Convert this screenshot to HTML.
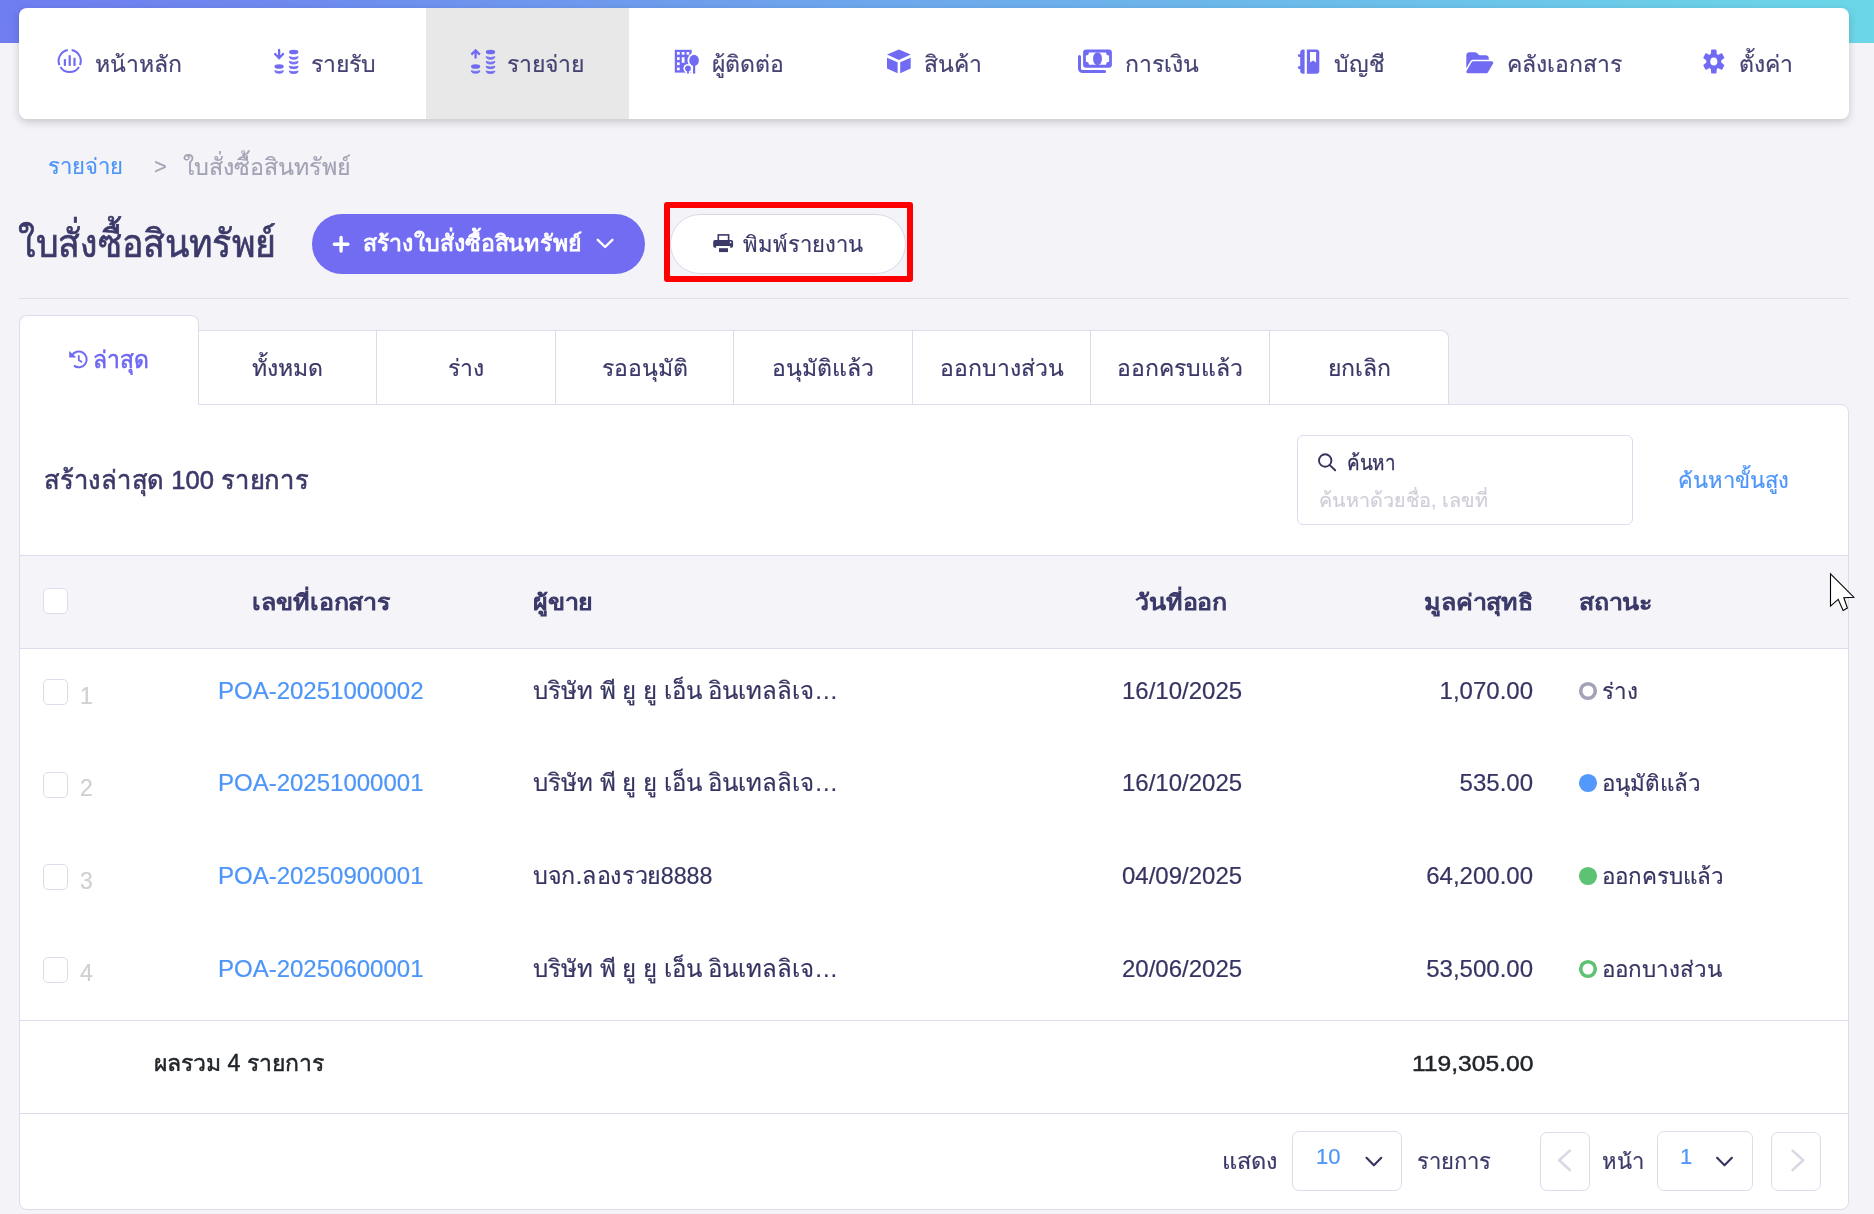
<!DOCTYPE html>
<html lang="th">
<head>
<meta charset="utf-8">
<title>ใบสั่งซื้อสินทรัพย์</title>
<style>
*{box-sizing:border-box;margin:0;padding:0}
html,body{width:1874px;height:1214px;overflow:hidden}
body{background:#f3f3f8;font-family:"Liberation Sans",sans-serif;color:#3b3969;position:relative;-webkit-text-stroke-width:.2px}
.abs{position:absolute;white-space:nowrap}
#topbar{left:0;top:0;width:1874px;height:43px;background:linear-gradient(90deg,#6f7df0 0%,#6bd7e8 100%)}
#nav{left:19px;top:8px;width:1830px;height:111px;background:#fff;border-radius:8px;box-shadow:0 3px 8px rgba(0,0,0,.18)}
#navactive{left:426px;top:8px;width:203px;height:111px;background:#e8e8e8}
.nt{font-size:23px;line-height:30px;top:49px;color:#454373;margin-left:-1px}
.bc{font-size:22px;line-height:30px;top:151.500px}
#title{left:18px;top:215.500px;font-size:38.600px;line-height:56px;color:#3b3969;transform-origin:0 50%;transform:scaleX(.926);-webkit-text-stroke:.7px #3b3969}
#btnc{left:312px;top:214px;width:333px;height:60px;border-radius:30px;background:#716cf1}
#btnct{left:362.800px;top:229px;font-size:22px;line-height:30px;font-weight:400;color:#fff;-webkit-text-stroke:.8px #fff;transform-origin:0 50%;transform:scaleX(1.053)}
#btnp{left:670px;top:214px;width:236px;height:60px;border-radius:30px;background:#fff;border:1px solid #d9d9e6}
#btnpt{left:742.500px;top:230px;font-size:22px;line-height:30px;color:#3b3969}
#red{left:663.500px;top:202px;width:249.500px;height:79.500px;border:6px solid #fe0000;border-radius:3px}
#hr{left:19px;top:298px;width:1830px;height:1px;background:#dfdfea}
.tab{top:330px;height:75px;background:#fff;border:1px solid #dcdcec;border-left:none;font-size:23px;line-height:30px;text-align:center;padding-top:22px;color:#3b3969}
#tab0{left:19px;top:315px;width:180px;height:90px;background:#fff;border:1px solid #dcdcec;border-bottom:none;border-radius:8px 8px 0 0}
#tab0t{left:93px;top:344.500px;font-size:24px;line-height:30px;color:#6d67f1;transform-origin:0 50%;transform:scaleX(.955);-webkit-text-stroke:.6px #6d67f1}
#card{left:19px;top:404px;width:1830px;height:806px;background:#fff;border:1px solid #dcdcec;border-radius:0 8px 8px 8px}
#ctitle{left:43.500px;top:462px;font-size:26px;line-height:36px;color:#3b3969;transform-origin:0 50%;transform:scaleX(.985);-webkit-text-stroke:.55px #3b3969}
#search{left:1297px;top:435px;width:336px;height:90px;border:1px solid #dcdcec;border-radius:6px;background:#fff}
#st{left:1347px;top:448px;font-size:21px;line-height:30px;color:#34325f;transform-origin:0 50%;transform:scaleX(.9);-webkit-text-stroke:.3px #34325f}
#sp{left:1319px;top:485px;font-size:19.800px;line-height:30px;color:#cfcfd9}
#adv{left:1678px;top:466px;font-size:22px;line-height:30px;color:#4d95f8}
#thead{left:20px;top:555px;width:1828px;height:94px;background:#f5f5f9;border-top:1px solid #dcdcec;border-bottom:1px solid #dcdcec}
.th{top:587.500px;font-size:22px;line-height:30px;font-weight:400;color:#3b3969;-webkit-text-stroke:1.05px #3b3969;transform-origin:0 50%;transform:scaleX(1.135)}
.th.r{transform-origin:100% 50%}
.cb{left:43px;width:25px;height:26px;border:1px solid #dcdcec;border-radius:5px;background:#fff}
.td{font-size:24px;line-height:30px;color:#363462}
.st{font-size:22.400px;margin-left:-1.500px;margin-top:1px}
.no{left:80px;font-size:23px;line-height:30px;color:#d0d0d0}
.lnk{color:#4d95f8}
.ln{left:20px;width:1828px;height:1px;background:#dcdcec}
.sum{font-size:23px;line-height:30px;color:#212529;-webkit-text-stroke:.45px #212529}
.sumr{font-size:22.400px;transform-origin:100% 50%;transform:scaleX(1.1)}
.pg{font-size:22px;line-height:30px;top:1147px;color:#3b3969}
.box{top:1131px;height:60px;border:1px solid #dcdcec;border-radius:7px;background:#fff}
.bl{font-size:22px;line-height:30px;top:1142px;color:#4d95f8}
#ov{left:0;top:0}
</style>
</head>
<body><div id="wrap" style="position:absolute;left:0;top:0;width:1874px;height:1214px;will-change:transform">
<div id="topbar" class="abs"></div>
<div id="nav" class="abs"></div>
<div id="navactive" class="abs"></div>
<div class="abs nt" style="left:96px">หน้าหลัก</div>
<div class="abs nt" style="left:312px">รายรับ</div>
<div class="abs nt" style="left:508px">รายจ่าย</div>
<div class="abs nt" style="left:713px">ผู้ติดต่อ</div>
<div class="abs nt" style="left:925px">สินค้า</div>
<div class="abs nt" style="left:1126px">การเงิน</div>
<div class="abs nt" style="left:1335px">บัญชี</div>
<div class="abs nt" style="left:1508px">คลังเอกสาร</div>
<div class="abs nt" style="left:1740px">ตั้งค่า</div>

<div class="abs bc" style="left:48px;color:#4d95f8">รายจ่าย</div>
<div class="abs bc" style="left:154px;color:#a3a3b5">&gt;</div>
<div class="abs bc" style="left:183px;color:#a3a3b5;font-size:23.3px">ใบสั่งซื้อสินทรัพย์</div>

<div id="title" class="abs">ใบสั่งซื้อสินทรัพย์</div>
<div id="btnc" class="abs"></div>
<div id="btnct" class="abs">สร้างใบสั่งซื้อสินทรัพย์</div>
<div id="btnp" class="abs"></div>
<div id="btnpt" class="abs">พิมพ์รายงาน</div>
<div id="red" class="abs"></div>
<div id="hr" class="abs"></div>

<div id="card" class="abs"></div>
<div id="tab0" class="abs"></div>
<div id="tab0t" class="abs">ล่าสุด</div>
<div class="abs tab" style="left:198px;width:179px;border-left:1px solid #dcdcec">ทั้งหมด</div>
<div class="abs tab" style="left:377px;width:179px">ร่าง</div>
<div class="abs tab" style="left:556px;width:178px">รออนุมัติ</div>
<div class="abs tab" style="left:734px;width:179px">อนุมัติแล้ว</div>
<div class="abs tab" style="left:913px;width:178px">ออกบางส่วน</div>
<div class="abs tab" style="left:1091px;width:179px">ออกครบแล้ว</div>
<div class="abs tab" style="left:1270px;width:179px;border-top-right-radius:8px">ยกเลิก</div>

<div id="ctitle" class="abs">สร้างล่าสุด 100 รายการ</div>
<div id="search" class="abs"></div>
<div id="st" class="abs">ค้นหา</div>
<div id="sp" class="abs">ค้นหาด้วยชื่อ, เลขที่</div>
<div id="adv" class="abs">ค้นหาขั้นสูง</div>

<div id="thead" class="abs"></div>
<div class="abs cb" style="top:588px"></div>
<div class="abs th" style="left:252px">เลขที่เอกสาร</div>
<div class="abs th" style="left:533px">ผู้ขาย</div>
<div class="abs th" style="left:1135px">วันที่ออก</div>
<div class="abs th r" style="right:341px">มูลค่าสุทธิ</div>
<div class="abs th" style="left:1579px">สถานะ</div>

<!-- row 1 -->
<div class="abs cb" style="top:679px"></div>
<div class="abs no" style="top:681px">1</div>
<div class="abs td lnk" style="left:218px;top:676px">POA-20251000002</div>
<div class="abs td" style="left:533px;top:676px">บริษัท พี ยู ยู เอ็น อินเทลลิเจ…</div>
<div class="abs td" style="left:1122px;top:676px">16/10/2025</div>
<div class="abs td" style="right:341px;top:676px">1,070.00</div>
<div class="abs td st" style="left:1603px;top:676px">ร่าง</div>
<!-- row 2 -->
<div class="abs cb" style="top:772px"></div>
<div class="abs no" style="top:773px">2</div>
<div class="abs td lnk" style="left:218px;top:768px">POA-20251000001</div>
<div class="abs td" style="left:533px;top:768px">บริษัท พี ยู ยู เอ็น อินเทลลิเจ…</div>
<div class="abs td" style="left:1122px;top:768px">16/10/2025</div>
<div class="abs td" style="right:341px;top:768px">535.00</div>
<div class="abs td st" style="left:1603px;top:768px">อนุมัติแล้ว</div>
<!-- row 3 -->
<div class="abs cb" style="top:864px"></div>
<div class="abs no" style="top:866px">3</div>
<div class="abs td lnk" style="left:218px;top:861px">POA-20250900001</div>
<div class="abs td" style="left:533px;top:861px;transform-origin:0 50%;transform:scaleX(.97)">บจก.ลองรวย8888</div>
<div class="abs td" style="left:1122px;top:861px">04/09/2025</div>
<div class="abs td" style="right:341px;top:861px">64,200.00</div>
<div class="abs td st" style="left:1603px;top:861px">ออกครบแล้ว</div>
<!-- row 4 -->
<div class="abs cb" style="top:957px"></div>
<div class="abs no" style="top:958px">4</div>
<div class="abs td lnk" style="left:218px;top:954px">POA-20250600001</div>
<div class="abs td" style="left:533px;top:954px">บริษัท พี ยู ยู เอ็น อินเทลลิเจ…</div>
<div class="abs td" style="left:1122px;top:954px">20/06/2025</div>
<div class="abs td" style="right:341px;top:954px">53,500.00</div>
<div class="abs td st" style="left:1603px;top:954px">ออกบางส่วน</div>

<div class="abs ln" style="top:1020px"></div>
<div class="abs sum" style="left:154px;top:1048px">ผลรวม 4 รายการ</div>
<div class="abs sum sumr" style="right:341px;top:1048.500px">119,305.00</div>
<div class="abs ln" style="top:1113px"></div>

<div class="abs pg" style="left:1222px;transform-origin:0 50%;transform:scaleX(1.07)">แสดง</div>
<div class="abs box" style="left:1292px;width:110px"></div>
<div class="abs bl" style="left:1316px">10</div>
<div class="abs pg" style="left:1417px">รายการ</div>
<div class="abs box" style="left:1540px;width:50px;top:1132px;height:59px"></div>
<div class="abs pg" style="left:1602px">หน้า</div>
<div class="abs box" style="left:1657px;width:96px"></div>
<div class="abs bl" style="left:1680px">1</div>
<div class="abs box" style="left:1771px;width:50px;top:1132px;height:59px"></div>

<svg id="ov" class="abs" width="1874" height="1214" viewBox="0 0 1874 1214">
<path d="M71.63 50.07A11.1 11.1 0 0 1 79.99 65.16 M79.01 67.05A11.1 11.1 0 0 1 60.39 67.05 M59.41 65.16A11.1 11.1 0 0 1 67.77 50.07" fill="none" stroke="#706bf2" stroke-width="2"/>
<rect x="63.8" y="59.1" width="2.2" height="6.8" fill="#706bf2"/>
<rect x="68.6" y="55.2" width="2.2" height="10.7" fill="#706bf2"/>
<rect x="73.4" y="57.8" width="2.2" height="8.1" fill="#706bf2"/>
<ellipse cx="279.1" cy="66.5" rx="4.6" ry="2.3" fill="#706bf2"/>
<path d="M274.8 70.7A4.3 2.5 0 0 0 283.4 70.7Q279.1 72.4 274.8 70.7Z" fill="#706bf2" stroke="#706bf2" stroke-width="0.9" stroke-linejoin="round"/>
<ellipse cx="293.7" cy="52" rx="4.7" ry="2.3" fill="#706bf2"/>
<path d="M289.3 56.7A4.4 2.5 0 0 0 298.1 56.7Q293.7 58.4 289.3 56.7Z" fill="#706bf2" stroke="#706bf2" stroke-width="0.9" stroke-linejoin="round"/>
<path d="M289.3 61.5A4.4 2.5 0 0 0 298.1 61.5Q293.7 63.2 289.3 61.5Z" fill="#706bf2" stroke="#706bf2" stroke-width="0.9" stroke-linejoin="round"/>
<path d="M289.3 66.2A4.4 2.5 0 0 0 298.1 66.2Q293.7 67.9 289.3 66.2Z" fill="#706bf2" stroke="#706bf2" stroke-width="0.9" stroke-linejoin="round"/>
<path d="M289.3 71.0A4.4 2.5 0 0 0 298.1 71.0Q293.7 72.7 289.3 71.0Z" fill="#706bf2" stroke="#706bf2" stroke-width="0.9" stroke-linejoin="round"/>
<path d="M279.1 49.9V57M275.1 54L279.1 58.2L283.1 54" fill="none" stroke="#706bf2" stroke-width="2.3" stroke-linecap="round" stroke-linejoin="miter"/>
<ellipse cx="475.6" cy="66.5" rx="4.6" ry="2.3" fill="#706bf2"/>
<path d="M471.3 70.7A4.3 2.5 0 0 0 479.9 70.7Q475.6 72.4 471.3 70.7Z" fill="#706bf2" stroke="#706bf2" stroke-width="0.9" stroke-linejoin="round"/>
<ellipse cx="490.5" cy="52" rx="4.7" ry="2.3" fill="#706bf2"/>
<path d="M486.1 56.7A4.4 2.5 0 0 0 494.9 56.7Q490.5 58.4 486.1 56.7Z" fill="#706bf2" stroke="#706bf2" stroke-width="0.9" stroke-linejoin="round"/>
<path d="M486.1 61.5A4.4 2.5 0 0 0 494.9 61.5Q490.5 63.2 486.1 61.5Z" fill="#706bf2" stroke="#706bf2" stroke-width="0.9" stroke-linejoin="round"/>
<path d="M486.1 66.2A4.4 2.5 0 0 0 494.9 66.2Q490.5 67.9 486.1 66.2Z" fill="#706bf2" stroke="#706bf2" stroke-width="0.9" stroke-linejoin="round"/>
<path d="M486.1 71.0A4.4 2.5 0 0 0 494.9 71.0Q490.5 72.7 486.1 71.0Z" fill="#706bf2" stroke="#706bf2" stroke-width="0.9" stroke-linejoin="round"/>
<path d="M475.6 58.6V51.5M471.4 54.6L475.6 50.3L479.8 54.6" fill="none" stroke="#706bf2" stroke-width="2.3" stroke-linejoin="miter"/>
<rect x="674.8" y="49.8" width="16.9" height="22.8" fill="#706bf2"/>
<rect x="677.0" y="52.0" width="2.7" height="2.7" fill="#fff"/>
<rect x="681.8" y="52.0" width="2.7" height="2.7" fill="#fff"/>
<rect x="686.6" y="52.0" width="2.7" height="2.7" fill="#fff"/>
<rect x="677.0" y="57.2" width="2.7" height="2.7" fill="#fff"/>
<rect x="681.8" y="57.2" width="2.7" height="5.6" fill="#fff"/>
<rect x="677.0" y="62.4" width="2.7" height="2.7" fill="#fff"/>
<rect x="677.0" y="67.6" width="2.7" height="2.7" fill="#fff"/>
<ellipse cx="694.1" cy="60.4" rx="6.6" ry="7.4" fill="#fff"/><rect x="691.2" y="64" width="5.8" height="10" fill="#fff"/>
<circle cx="688" cy="68.5" r="4.6" fill="#fff"/><rect x="685.8" y="69" width="4.4" height="5" fill="#fff"/>
<ellipse cx="694.1" cy="60.4" rx="4.8" ry="5.6" fill="#706bf2"/><rect x="693" y="64" width="2.2" height="9.6" fill="#706bf2"/>
<circle cx="688" cy="68.5" r="2.9" fill="#706bf2"/><rect x="687.1" y="70" width="1.8" height="3.6" fill="#706bf2"/>
<path d="M898.9 49.4L910.7 54.4L898.9 60L887 54.4Z M887 57.8L897.6 62.2V73.3L887 68.5Z M900.2 62.2L910.7 57.8V68.5L900.2 73.3Z" fill="#706bf2"/>
<rect x="1083.1" y="49.6" width="28.8" height="18.2" rx="3" fill="#706bf2"/>
<path d="M1088.9 52.6H1106.1A3 3 0 0 0 1109.1 55.6V61.8A3 3 0 0 0 1106.1 64.8H1088.9A3 3 0 0 0 1085.9 61.8V55.6A3 3 0 0 0 1088.9 52.6Z" fill="#fff"/>
<ellipse cx="1097.5" cy="58.7" rx="4.5" ry="6.5" fill="#706bf2"/>
<path d="M1079.5 56.4V68.5A3 3 0 0 0 1082.5 71.5H1104.6" fill="none" stroke="#706bf2" stroke-width="3" stroke-linecap="round"/>
<path d="M1304.6 49.4V73.7H1303.2A3 3 0 0 1 1300.2 70.7V69H1299.2A1.4 1.4 0 0 1 1299.2 66.2H1300.2V57H1299.2A1.4 1.4 0 0 1 1299.2 54.2H1300.2V52.4A3 3 0 0 1 1303.2 49.4Z" fill="#706bf2"/>
<path d="M1306.9 49.4H1316.3A3 3 0 0 1 1319.3 52.4V70.7A3 3 0 0 1 1316.3 73.7H1306.9Z" fill="#706bf2"/>
<path d="M1310 51.9H1316.1V62.6L1313.05 60.5L1310 62.6Z" fill="#fff"/>
<path transform="translate(1466.3 50.7) scale(0.046875)" d="M88.7 223.8L0 375.8V96C0 60.7 28.7 32 64 32H181.500c17 0 33.300 6.700 45.300 18.700l26.500 26.500c12 12 28.300 18.700 45.300 18.700H416c35.300 0 64 28.700 64 64v32H144c-22.800 0-43.800 12.100-55.300 31.800zm27.600 16.100C122.100 230 132.600 224 144 224H544c11.500 0 22 6.100 27.700 16.100s5.700 22.200-.100 32.100l-112 192C453.900 474 443.400 480 432 480H32c-11.500 0-22-6.100-27.700-16.100s-5.700-22.200 .100-32.100l112-192z" fill="#706bf2"/>
<g transform="translate(1713.8 0) scale(0.9 1) translate(-1713.8 0)"><circle cx="1713.8" cy="61.5" r="8.3" fill="#706bf2"/><path transform="rotate(0 1713.8 61.5)" d="M1711.5 49.4H1716.1Q1716.7 49.4 1716.7 50.1L1717.3 55.5H1710.3L1710.8999999999999 50.1Q1710.8999999999999 49.4 1711.5 49.4Z" fill="#706bf2"/><path transform="rotate(60 1713.8 61.5)" d="M1711.5 49.4H1716.1Q1716.7 49.4 1716.7 50.1L1717.3 55.5H1710.3L1710.8999999999999 50.1Q1710.8999999999999 49.4 1711.5 49.4Z" fill="#706bf2"/><path transform="rotate(120 1713.8 61.5)" d="M1711.5 49.4H1716.1Q1716.7 49.4 1716.7 50.1L1717.3 55.5H1710.3L1710.8999999999999 50.1Q1710.8999999999999 49.4 1711.5 49.4Z" fill="#706bf2"/><path transform="rotate(180 1713.8 61.5)" d="M1711.5 49.4H1716.1Q1716.7 49.4 1716.7 50.1L1717.3 55.5H1710.3L1710.8999999999999 50.1Q1710.8999999999999 49.4 1711.5 49.4Z" fill="#706bf2"/><path transform="rotate(240 1713.8 61.5)" d="M1711.5 49.4H1716.1Q1716.7 49.4 1716.7 50.1L1717.3 55.5H1710.3L1710.8999999999999 50.1Q1710.8999999999999 49.4 1711.5 49.4Z" fill="#706bf2"/><path transform="rotate(300 1713.8 61.5)" d="M1711.5 49.4H1716.1Q1716.7 49.4 1716.7 50.1L1717.3 55.5H1710.3L1710.8999999999999 50.1Q1710.8999999999999 49.4 1711.5 49.4Z" fill="#706bf2"/><circle cx="1713.8" cy="61.5" r="3.9" fill="#fff"/></g>
<path d="M71.82 355.69A7.9 7.9 0 1 1 73.94 365.63" fill="none" stroke="#706bf2" stroke-width="2"/>
<path d="M69.2 351V357.600H76.400Z" fill="#706bf2"/>
<path d="M78.8 355.3V360L82.1 362.300" fill="none" stroke="#706bf2" stroke-width="1.8"/>
<path d="M334.300 244.300H347.900M341.100 237.500V251.100" stroke="#fff" stroke-width="3.4" stroke-linecap="round"/>
<path d="M597.8 239.8L605.1 247L612.4 239.8" fill="none" stroke="#fff" stroke-width="2.4" stroke-linecap="round" stroke-linejoin="round"/>
<rect x="718.3" y="234.9" width="10.3" height="6" fill="#fff" stroke="#3b3969" stroke-width="1.6"/>
<path d="M715 239.9H731.3A1.8 1.8 0 0 1 733.1 241.7V246A1.7 1.7 0 0 1 731.4 247.7H730.2V245.9H716.2V247.7H714.9A1.7 1.7 0 0 1 713.2 246V241.700A1.8 1.8 0 0 1 715 239.900Z" fill="#3b3969"/>
<rect x="719" y="248.2" width="9" height="3.9" fill="#3b3969"/>
<circle cx="730.6" cy="242.3" r="0.9" fill="#fff"/>
<circle cx="1325.2" cy="460.5" r="6.2" fill="none" stroke="#34325f" stroke-width="1.9"/><path d="M1329.8 465.1L1335.2 470.3" stroke="#34325f" stroke-width="1.9" stroke-linecap="round"/>
<circle cx="1588" cy="691" r="7.3" fill="none" stroke="#a2a2b9" stroke-width="3.6"/>
<circle cx="1588" cy="783" r="9.1" fill="#5398fb"/>
<circle cx="1588" cy="876" r="9.1" fill="#5dc273"/>
<circle cx="1588" cy="969" r="7.3" fill="none" stroke="#5dc273" stroke-width="3.6"/>
<path d="M1366.5 1157.800L1373.9 1165.300L1381.3 1157.800" fill="none" stroke="#34325f" stroke-width="2.1" stroke-linecap="round" stroke-linejoin="round"/>
<path d="M1717.1 1157.800L1724.5 1165.300L1731.9 1157.800" fill="none" stroke="#34325f" stroke-width="2.1" stroke-linecap="round" stroke-linejoin="round"/>
<path d="M1569.8 1150.600L1559.200 1160.300L1569.800 1170" fill="none" stroke="#d9d9e6" stroke-width="2.6" stroke-linecap="round" stroke-linejoin="round"/>
<path d="M1792.600 1150.600L1803.200 1160.300L1792.600 1170" fill="none" stroke="#d9d9e6" stroke-width="2.6" stroke-linecap="round" stroke-linejoin="round"/>
<path d="M1830.500 573.800L1853.800 597.200L1843.800 597.700L1847.400 608.100L1843.100 610.400L1838.200 599.300L1830.500 606.100Z" fill="#fff" stroke="#000" stroke-width="1.1" stroke-linejoin="miter" stroke-miterlimit="3"/>
</svg>
</div></body>
</html>
